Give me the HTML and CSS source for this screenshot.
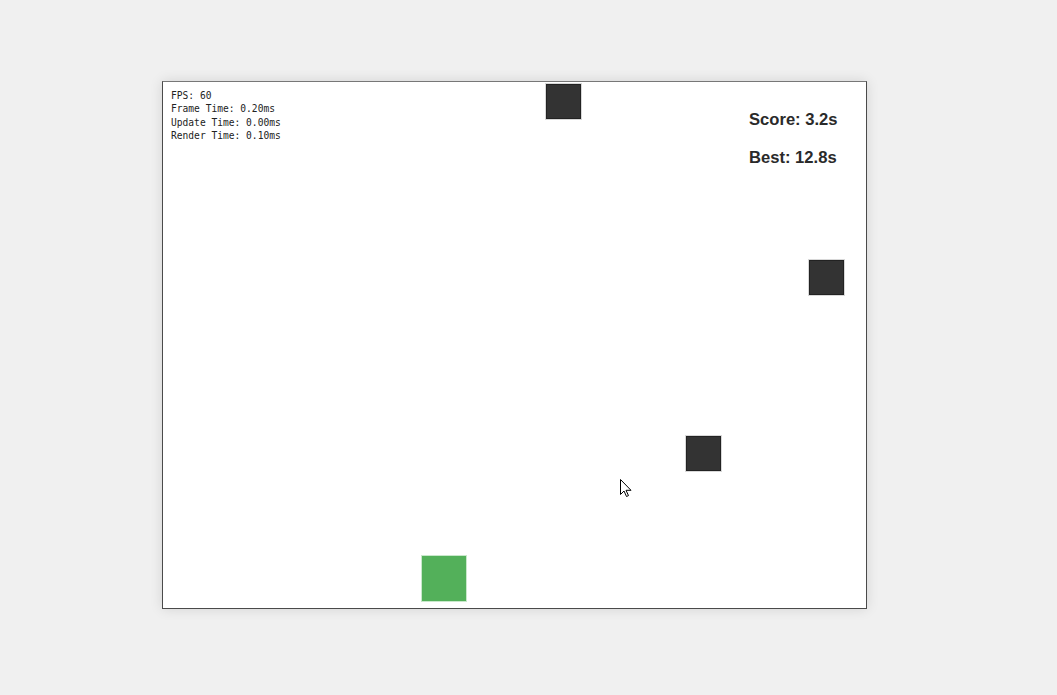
FILE: index.html
```html
<!DOCTYPE html>
<html>
<head>
<meta charset="utf-8">
<link rel="stylesheet" href="styles.css">
</head>
<body>
<div class="game">
  <div class="debug">
    <div>FPS: 60</div>
    <div>Frame Time: 0.20ms</div>
    <div>Update Time: 0.00ms</div>
    <div>Render Time: 0.10ms</div>
  </div>
  <div class="hud">
    <div>Score: 3.2s</div>
    <div>Best: 12.8s</div>
  </div>
  <div class="block" style="left:383px;top:2px"></div>
  <div class="block" style="left:646px;top:178px"></div>
  <div class="block" style="left:523px;top:354px"></div>
  <div class="player" style="left:259px;top:474px"></div>
  <svg class="cursor" width="12" height="19" viewBox="0 0 12 19">
    <path d="M0.5 0.5 L0.5 15.5 L4 12 L6.5 17.5 L8.5 16.6 L6 11.3 L11 11.3 Z" fill="#fff" stroke="#000" stroke-width="1" stroke-linejoin="round"/>
  </svg>
</div>
</body>
</html>
```
FILE: styles.css
```css
html, body {
  margin: 0;
  padding: 0;
  background: #f0f0f0;
}
body {
  padding: 81px 0 0 162px;
  height: 695px;
  box-sizing: border-box;
  overflow: hidden;
}
.game {
  position: relative;
  width: 703px;
  height: 526px;
  background: #ffffff;
  border: 1px solid #4a4a4a;
  border-top-color: #777;
  box-shadow: 0 0 12px rgba(0, 0, 0, 0.12);
  overflow: hidden;
}
.debug {
  position: absolute;
  left: 8px;
  top: 7px;
  font-family: "DejaVu Sans Mono", "Liberation Mono", monospace;
  font-size: 9.6px;
  line-height: 13.3px;
  color: #222;
}
.hud {
  position: absolute;
  left: 586px;
  top: 19px;
  font-family: "Liberation Sans", Arial, sans-serif;
  font-weight: bold;
  font-size: 16.6px;
  line-height: 38px;
  color: #2a2a2a;
}
.block {
  position: absolute;
  width: 35px;
  height: 35px;
  box-sizing: border-box;
  background: #333333;
  border: 1px solid #222;
  box-shadow: 0 0 0 1px #d8d8d8;
}
.player {
  position: absolute;
  width: 44px;
  height: 45px;
  background: #53b05a;
  box-shadow: 0 0 0 1px #c9e8cb;
}
.cursor {
  position: absolute;
  left: 457px;
  top: 397px;
}
```
